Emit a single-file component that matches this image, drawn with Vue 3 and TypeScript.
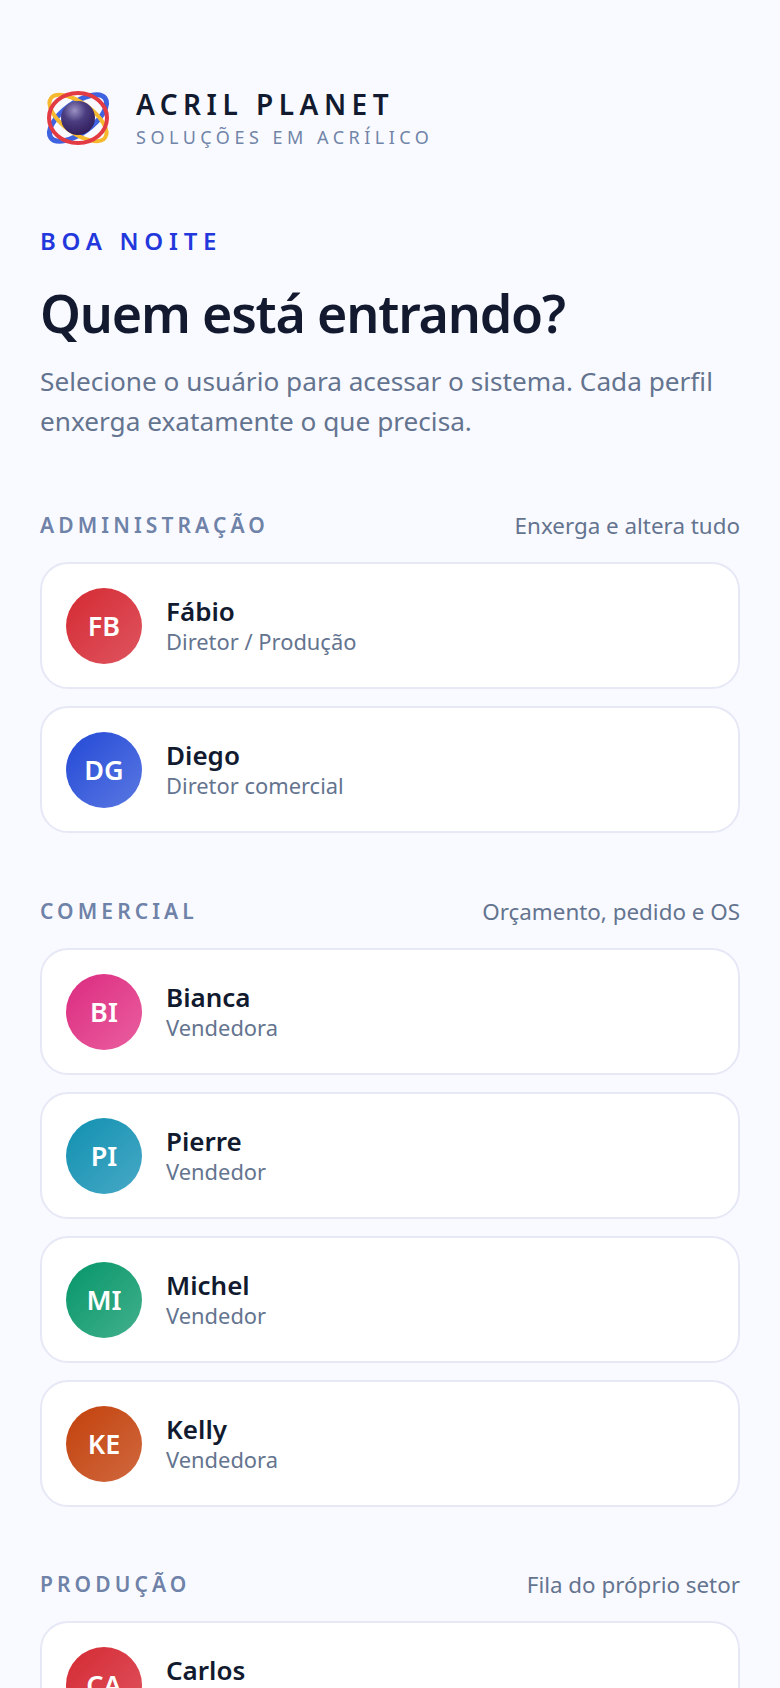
<script setup lang="ts">
interface Person { initials: string; name: string; role: string; gradient: string }
interface Group { title: string; hint: string; people: Person[] }

const red = 'linear-gradient(135deg, #d42a32, #df5560)'
const groups: Group[] = [
  { title: 'ADMINISTRAÇÃO', hint: 'Enxerga e altera tudo', people: [
    { initials: 'FB', name: 'Fábio', role: 'Diretor / Produção', gradient: red },
    { initials: 'DG', name: 'Diego', role: 'Diretor comercial', gradient: 'linear-gradient(135deg, #2349d6, #5a78e2)' },
  ] },
  { title: 'COMERCIAL', hint: 'Orçamento, pedido e OS', people: [
    { initials: 'BI', name: 'Bianca', role: 'Vendedora', gradient: 'linear-gradient(135deg, #db2b80, #ea5f9f)' },
    { initials: 'PI', name: 'Pierre', role: 'Vendedor', gradient: 'linear-gradient(135deg, #1190b0, #47a9c6)' },
    { initials: 'MI', name: 'Michel', role: 'Vendedor', gradient: 'linear-gradient(135deg, #059669, #43b08c)' },
    { initials: 'KE', name: 'Kelly', role: 'Vendedora', gradient: 'linear-gradient(135deg, #c2410c, #d0693f)' },
  ] },
  { title: 'PRODUÇÃO', hint: 'Fila do próprio setor', people: [
    { initials: 'CA', name: 'Carlos', role: 'Produção', gradient: red },
  ] },
]
</script>

<template>
  <main class="page">
    <header class="brand">
      <svg class="logo" width="76" height="70" viewBox="0 0 76 70" aria-hidden="true">
        <defs>
          <radialGradient id="ball" cx="40%" cy="28%" r="78%">
            <stop offset="0" stop-color="#9a92c4" />
            <stop offset="0.42" stop-color="#4b3d80" />
            <stop offset="1" stop-color="#2e1a58" />
          </radialGradient>
        </defs>
        <g transform="rotate(-36 38 35)">
          <ellipse cx="38" cy="35" rx="33.5" ry="15" fill="none" stroke="#3f62e0" stroke-width="5" />
        </g>
        <g transform="rotate(36 38 35)">
          <ellipse cx="38" cy="35" rx="33.5" ry="15" fill="none" stroke="#f5b82e" stroke-width="4" />
        </g>
        <ellipse cx="38" cy="35" rx="29" ry="25" fill="none" stroke="#e23b44" stroke-width="4" />
        <circle cx="38" cy="35" r="17" fill="url(#ball)" />
      </svg>
      <div class="brand-text">
        <div class="brand-name">ACRIL PLANET</div>
        <div class="brand-sub">SOLUÇÕES EM ACRÍLICO</div>
      </div>
    </header>

    <p class="greeting">BOA NOITE</p>
    <h1 class="title">Quem está entrando?</h1>
    <p class="lead">Selecione o usuário para acessar o sistema. Cada perfil enxerga exatamente o que precisa.</p>

    <section v-for="group in groups" :key="group.title" class="group">
      <div class="group-head">
        <span class="group-title">{{ group.title }}</span>
        <span class="group-hint">{{ group.hint }}</span>
      </div>
      <div class="cards">
        <button v-for="p in group.people" :key="p.name" class="card" type="button">
          <span class="avatar" :style="{ background: p.gradient }">{{ p.initials }}</span>
          <span class="info">
            <span class="name">{{ p.name }}</span>
            <span class="role">{{ p.role }}</span>
          </span>
        </button>
      </div>
    </section>
  </main>
</template>

<style>
html, body { margin: 0; background: #f9faff; overflow: hidden; height: 1688px; }
</style>

<style scoped>
.page {
  box-sizing: border-box;
  width: 780px;
  height: 1688px;
  overflow: hidden;
  padding: 83px 40px 0;
  background: #f9faff;
  font-family: "Noto Sans", sans-serif;
  color: #111a2e;
}
.brand { display: flex; align-items: center; gap: 20px; }
.logo { display: block; flex: none; }
.brand-text { display: flex; flex-direction: column; gap: 4px; }
.brand-name { font-size: 28px; line-height: 34px; font-weight: 600; letter-spacing: 5.5px; }
.brand-sub { font-size: 18px; line-height: 24px; letter-spacing: 4.5px; color: #7185a8; }
.greeting { margin: 72px 0 0; font-size: 24px; line-height: 32px; font-weight: 600; letter-spacing: 5.75px; color: #2338dc; }
.title { margin: 21px 0 0; font-size: 52px; line-height: 70px; font-weight: 600; letter-spacing: -1.2px; color: #131a30; }
.lead { margin: 13px 0 0; font-size: 26.2px; line-height: 40px; color: #64748f; }
.group { margin-top: 67px; }
.group + .group { margin-top: 61px; }
.group:last-child { margin-top: 60px; }
.group-head { display: flex; justify-content: space-between; align-items: center; height: 34px; }
.group-title { font-size: 21px; font-weight: 600; letter-spacing: 4.1px; color: #6f82a8; }
.group-hint { font-size: 22.4px; color: #64748f; }
.cards { display: flex; flex-direction: column; gap: 17px; margin-top: 20px; }
.card {
  box-sizing: border-box;
  display: flex;
  align-items: center;
  gap: 24px;
  width: 100%;
  height: 127px;
  padding: 0 24px;
  background: #fff;
  border: 2px solid #e6e8f6;
  border-radius: 28px;
  font: inherit;
  color: inherit;
  text-align: left;
}
.avatar {
  flex: none;
  display: flex;
  align-items: center;
  justify-content: center;
  width: 76px;
  height: 76px;
  border-radius: 50%;
  color: #fff;
  font-size: 27px;
  font-weight: 600;
}
.info { display: flex; flex-direction: column; }
.name { font-size: 26px; line-height: 33px; font-weight: 600; color: #111a2e; }
.role { font-size: 21.9px; line-height: 28px; color: #64748f; }
</style>
